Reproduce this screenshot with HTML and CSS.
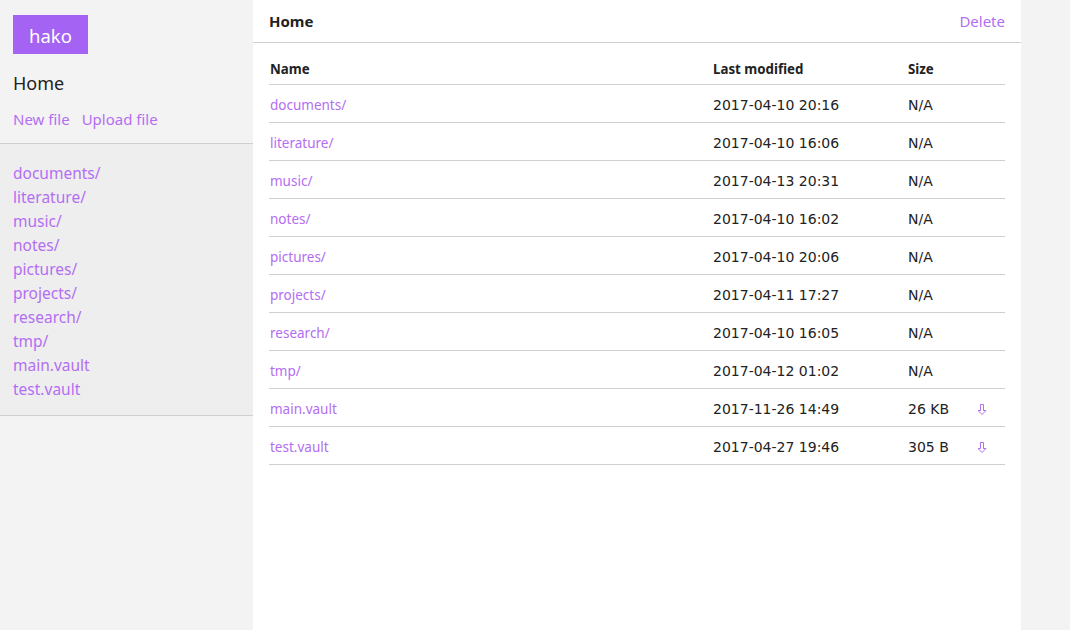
FILE: index.html
```html
<!DOCTYPE html>
<html>
<head>
<meta charset="utf-8">
<link rel="stylesheet" href="styles.css">
</head>
<body>
<div class="app">
  <aside class="sidebar">
    <div class="top">
      <div class="logo">hako</div>
      <div class="crumb">Home</div>
      <div class="actions"><a>New file</a><a>Upload file</a></div>
    </div>
    <ul class="tree">
      <li><a>documents/</a></li>
      <li><a>literature/</a></li>
      <li><a>music/</a></li>
      <li><a>notes/</a></li>
      <li><a>pictures/</a></li>
      <li><a>projects/</a></li>
      <li><a>research/</a></li>
      <li><a>tmp/</a></li>
      <li><a>main.vault</a></li>
      <li><a>test.vault</a></li>
    </ul>
  </aside>
  <main class="main">
    <header class="head">
      <span class="title">Home</span>
      <a class="delete">Delete</a>
    </header>
    <table class="files">
      <colgroup><col class="c-name"><col class="c-date"><col class="c-size"><col class="c-dl"></colgroup>
      <thead>
        <tr><th>Name</th><th>Last modified</th><th>Size</th><th></th></tr>
      </thead>
      <tbody>
        <tr><td><a>documents/</a></td><td class="mono">2017-04-10 20:16</td><td class="mono">N/A</td><td></td></tr>
        <tr><td><a>literature/</a></td><td class="mono">2017-04-10 16:06</td><td class="mono">N/A</td><td></td></tr>
        <tr><td><a>music/</a></td><td class="mono">2017-04-13 20:31</td><td class="mono">N/A</td><td></td></tr>
        <tr><td><a>notes/</a></td><td class="mono">2017-04-10 16:02</td><td class="mono">N/A</td><td></td></tr>
        <tr><td><a>pictures/</a></td><td class="mono">2017-04-10 20:06</td><td class="mono">N/A</td><td></td></tr>
        <tr><td><a>projects/</a></td><td class="mono">2017-04-11 17:27</td><td class="mono">N/A</td><td></td></tr>
        <tr><td><a>research/</a></td><td class="mono">2017-04-10 16:05</td><td class="mono">N/A</td><td></td></tr>
        <tr><td><a>tmp/</a></td><td class="mono">2017-04-12 01:02</td><td class="mono">N/A</td><td></td></tr>
        <tr><td><a>main.vault</a></td><td class="mono">2017-11-26 14:49</td><td class="mono">26 KB</td><td class="dl"><svg class="arrow" width="9" height="11" viewBox="0 0 9 11"><path d="M2.5 0.5H5.5V6.5H8L4 10.5L0 6.5H2.5Z" fill="none" stroke="#b36ef2" stroke-width="1"/></svg></td></tr>
        <tr><td><a>test.vault</a></td><td class="mono">2017-04-27 19:46</td><td class="mono">305 B</td><td class="dl"><svg class="arrow" width="9" height="11" viewBox="0 0 9 11"><path d="M2.5 0.5H5.5V6.5H8L4 10.5L0 6.5H2.5Z" fill="none" stroke="#b36ef2" stroke-width="1"/></svg></td></tr>
      </tbody>
    </table>
  </main>
</div>
</body>
</html>
```

FILE: styles.css
```css
html, body {
  margin: 0;
  padding: 0;
  height: 100%;
  background: #f3f3f3;
}
body {
  font-family: "Noto Sans", "Open Sans", sans-serif;
  color: #222;
}
a {
  color: #b36ef2;
  cursor: pointer;
}
.app {
  display: flex;
  height: 630px;
}
.sidebar {
  width: 253px;
  flex: none;
  background: #f3f3f3;
}
.top {
  padding: 15px 13px 0;
  height: 128px;
  border-bottom: 1px solid #cfcfcf;
}
.logo {
  display: inline-block;
  width: 75px;
  height: 39px;
  line-height: 42px;
  text-align: center;
  background: #a463f2;
  color: #fff;
  font-size: 18.5px;
}
.crumb {
  margin-top: 16px;
  font-size: 18px;
  line-height: 26px;
  color: #222;
}
.actions {
  margin-top: 13px;
  display: flex;
  gap: 12px;
  font-size: 15px;
  line-height: 20px;
}
.tree {
  list-style: none;
  margin: 0;
  padding: 17px 13px 14px;
  background: #eeeeee;
  border-bottom: 1px solid #cfcfcf;
  font-size: 15.5px;
  line-height: 24px;
}
.main {
  width: 768px;
  flex: none;
  background: #fff;
}
.head {
  height: 42px;
  display: flex;
  align-items: center;
  justify-content: space-between;
  padding: 0 16px;
  border-bottom: 1px solid #cfcfcf;
}
.title {
  font-weight: bold;
  font-size: 15px;
}
.delete {
  font-size: 15px;
}
.files {
  margin: 11px 16px 0;
  width: 736px;
  border-collapse: collapse;
  table-layout: fixed;
  font-size: 13.5px;
}
.c-name { width: 443px; }
.c-date { width: 195px; }
.c-size { width: 52px; }
.c-dl { width: 46px; }
.files th {
  text-align: left;
  font-weight: bold;
  height: 30px;
  padding: 0 0 0 1px;
  border-bottom: 1px solid #cfcfcf;
  vertical-align: middle;
  font-size: 13.3px;
}
.files td {
  height: 35px;
  padding: 2px 0 0 1px;
  border-bottom: 1px solid #cfcfcf;
  vertical-align: middle;
  white-space: nowrap;
}
.mono {
  font-family: "DejaVu Sans", sans-serif;
  font-size: 14px;
}
.files td.dl {
  text-align: center;
  padding-left: 0;
}
.arrow {
  display: inline-block;
  vertical-align: middle;
}
```
